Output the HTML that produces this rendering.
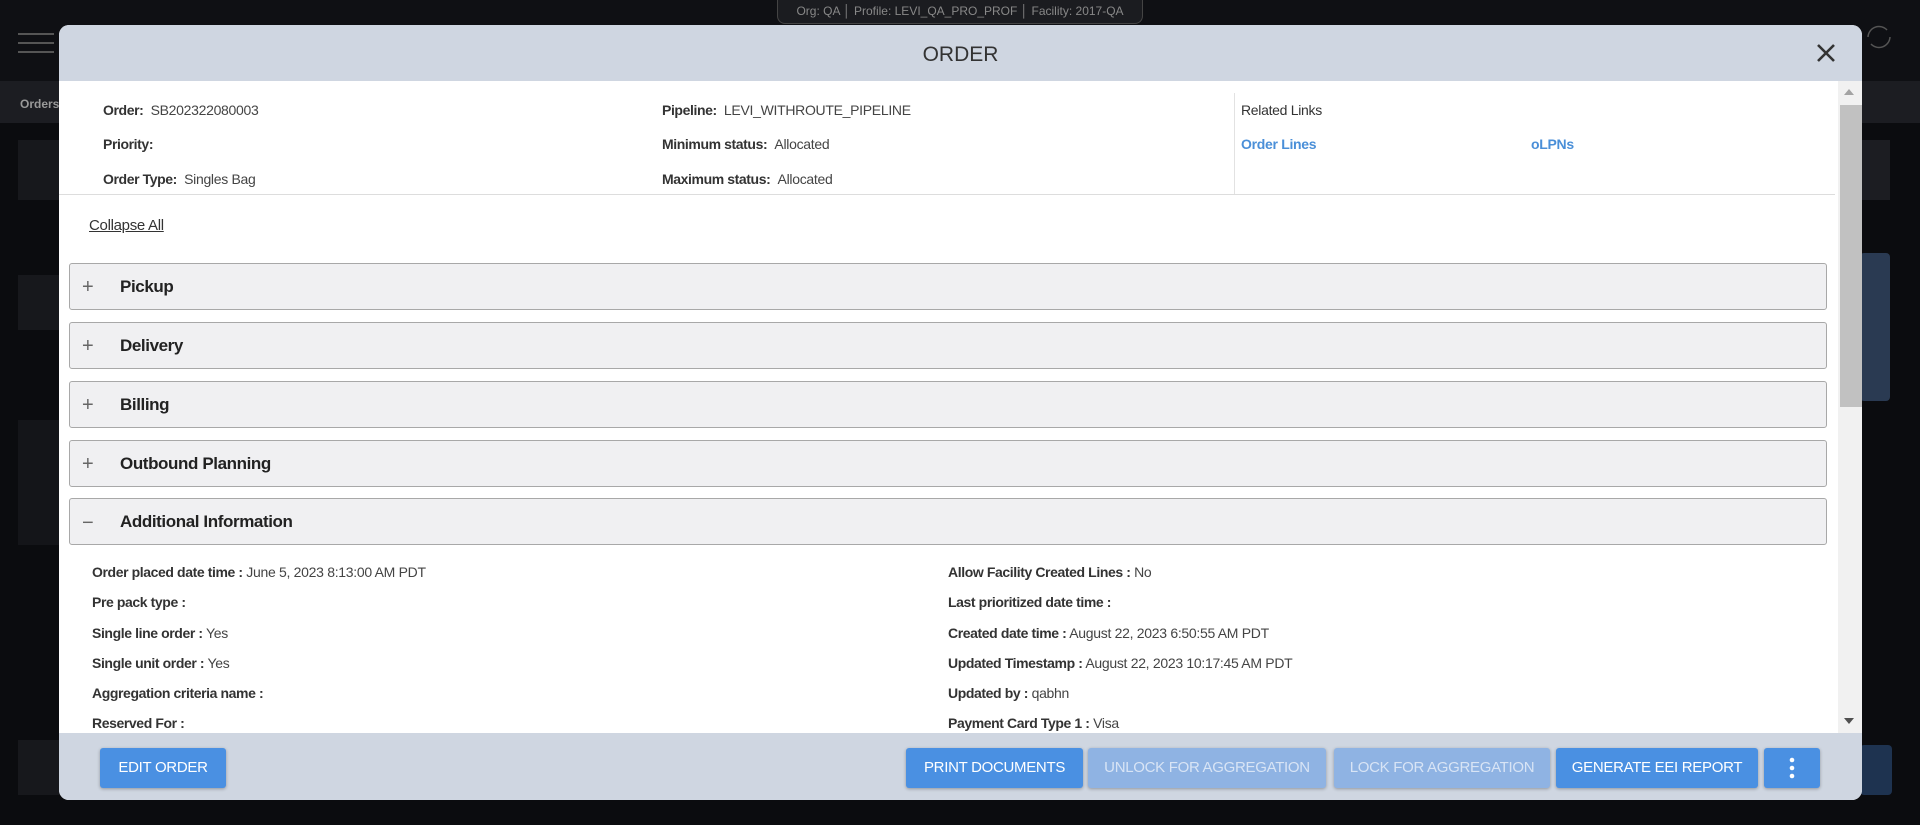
<!DOCTYPE html>
<html><head><meta charset="utf-8"><style>
*{box-sizing:border-box;margin:0;padding:0}
body{width:1920px;height:825px;background:#0b0c0f;font-family:"Liberation Sans",sans-serif;position:relative;overflow:hidden;color:#333}
.abs{position:absolute}
.lbl{font-weight:bold;color:#333;font-size:14px;letter-spacing:-0.4px}
.val{color:#444;font-size:14px;letter-spacing:-0.3px}
.acc{position:absolute;left:69px;width:1758px;height:47px;background:#f0f0f2;border:1px solid #a8a8a8;border-radius:3px}
.acc .s{position:absolute;left:12px;top:13px;font-size:20px;color:#666;line-height:20px}
.acc .t{position:absolute;left:50px;top:13px;font-size:17px;font-weight:bold;color:#222;letter-spacing:-0.4px}
.row{position:absolute;font-size:14px;letter-spacing:-0.3px}
.btn{position:absolute;top:748px;height:40px;border-radius:3px;background:#4a90e2;color:#fff;font-size:15px;text-align:center;line-height:40px;box-shadow:0 1px 3px rgba(0,0,0,.3);letter-spacing:-0.3px}
.btn.d{background:#8fb3e3;color:#d8e4f5}
</style></head><body>
<div class="abs" style="left:0;top:0;width:1920px;height:81px;background:#0f1014"></div>
<div class="abs" style="left:18px;top:33px;width:36px;height:2px;background:#555;box-shadow:0 9px 0 #555,0 18px 0 #555"></div>
<div class="abs" style="left:777px;top:0;width:366px;height:24px;border:1px solid #444;border-top:none;border-radius:0 0 8px 8px;background:#1b1c20;color:#888;font-size:12px;line-height:22px;text-align:center">Org: QA │ Profile: LEVI_QA_PRO_PROF │ Facility: 2017-QA</div>
<div class="abs" style="left:0;top:81px;width:1920px;height:42px;background:#1c1d22"></div>
<div class="abs" style="left:20px;top:97px;color:#999;font-size:12px;font-weight:bold">Orders</div>
<div class="abs" style="left:18px;top:140px;width:50px;height:60px;background:#17181c"></div>
<div class="abs" style="left:18px;top:275px;width:50px;height:55px;background:#17181c"></div>
<div class="abs" style="left:18px;top:420px;width:50px;height:125px;background:#141519"></div>
<div class="abs" style="left:18px;top:740px;width:50px;height:55px;background:#17181c"></div>
<div class="abs" style="left:1860px;top:140px;width:30px;height:60px;background:#1c1d22"></div>
<div class="abs" style="left:1860px;top:253px;width:30px;height:148px;background:#2a3a52;border-radius:4px"></div>
<div class="abs" style="left:1860px;top:745px;width:32px;height:50px;background:#1e3350;border-radius:4px"></div>
<svg class="abs" style="left:1862px;top:20px" width="34" height="34" viewBox="0 0 34 34"><path d="M6 17a11 11 0 0 1 19-7M28 17a11 11 0 0 1-19 7" stroke="#555" stroke-width="1.5" fill="none"/></svg>

<div class="abs" style="left:59px;top:25px;width:1803px;height:775px;background:#fff;border-radius:10px;overflow:hidden">
 <div class="abs" style="left:0;top:0;width:1803px;height:56px;background:#cfd6e1"></div>
 <div class="abs" style="left:0;top:18px;width:1803px;text-align:center;font-size:21px;color:#333">ORDER</div>
 <svg class="abs" style="left:1756px;top:17px" width="22" height="22" viewBox="0 0 22 22"><path d="M3 3L19 19M19 3L3 19" stroke="#333" stroke-width="2.6"/></svg>
 <div class="abs" style="left:1779px;top:56px;width:24px;height:652px;background:#f1f1f1"></div>
 <div class="abs" style="left:1781px;top:80px;width:22px;height:302px;background:#c1c1c1"></div>
 <div class="abs" style="left:1785px;top:64px;width:0;height:0;border:5px solid transparent;border-bottom:6px solid #a3a3a3;border-top:none"></div>
 <div class="abs" style="left:1785px;top:693px;width:0;height:0;border:5px solid transparent;border-top:6px solid #505050;border-bottom:none"></div>
</div>

<div class="abs" style="left:59px;top:194px;width:1776px;height:1px;background:#ddd"></div>
<div class="abs" style="left:1234px;top:93px;width:1px;height:101px;background:#e2e2e2"></div>
<div class="row" style="left:103px;top:102px"><span class="lbl">Order:</span> <span class="val">&nbsp;SB202322080003</span></div>
<div class="row" style="left:103px;top:136px"><span class="lbl">Priority:</span></div>
<div class="row" style="left:103px;top:171px"><span class="lbl">Order Type:</span> <span class="val">&nbsp;Singles Bag</span></div>
<div class="row" style="left:662px;top:102px"><span class="lbl">Pipeline:</span> <span class="val">&nbsp;LEVI_WITHROUTE_PIPELINE</span></div>
<div class="row" style="left:662px;top:136px"><span class="lbl">Minimum status:</span> <span class="val">&nbsp;Allocated</span></div>
<div class="row" style="left:662px;top:171px"><span class="lbl">Maximum status:</span> <span class="val">&nbsp;Allocated</span></div>
<div class="row" style="left:1241px;top:102px;color:#333">Related Links</div>
<div class="row" style="left:1241px;top:136px;color:#4a8fd8;font-weight:bold">Order Lines</div>
<div class="row" style="left:1531px;top:136px;color:#4a8fd8;font-weight:bold">oLPNs</div>
<div class="row" style="left:89px;top:217px;font-size:15px;color:#333;text-decoration:underline">Collapse All</div>

<div class="acc" style="top:263px"><span class="s">+</span><span class="t">Pickup</span></div>
<div class="acc" style="top:322px"><span class="s">+</span><span class="t">Delivery</span></div>
<div class="acc" style="top:381px"><span class="s">+</span><span class="t">Billing</span></div>
<div class="acc" style="top:440px"><span class="s">+</span><span class="t">Outbound Planning</span></div>
<div class="acc" style="top:498px"><span class="s" style="top:14px">−</span><span class="t">Additional Information</span></div>

<div class="row" style="left:92px;top:564px"><span class="lbl">Order placed date time :</span> <span class="val">June 5, 2023 8:13:00 AM PDT</span></div>
<div class="row" style="left:92px;top:594px"><span class="lbl">Pre pack type :</span></div>
<div class="row" style="left:92px;top:625px"><span class="lbl">Single line order :</span> <span class="val">Yes</span></div>
<div class="row" style="left:92px;top:655px"><span class="lbl">Single unit order :</span> <span class="val">Yes</span></div>
<div class="row" style="left:92px;top:685px"><span class="lbl">Aggregation criteria name :</span></div>
<div class="row" style="left:92px;top:715px"><span class="lbl">Reserved For :</span></div>
<div class="row" style="left:948px;top:564px"><span class="lbl">Allow Facility Created Lines :</span> <span class="val">No</span></div>
<div class="row" style="left:948px;top:594px"><span class="lbl">Last prioritized date time :</span></div>
<div class="row" style="left:948px;top:625px"><span class="lbl">Created date time :</span> <span class="val">August 22, 2023 6:50:55 AM PDT</span></div>
<div class="row" style="left:948px;top:655px"><span class="lbl">Updated Timestamp :</span> <span class="val">August 22, 2023 10:17:45 AM PDT</span></div>
<div class="row" style="left:948px;top:685px"><span class="lbl">Updated by :</span> <span class="val">qabhn</span></div>
<div class="row" style="left:948px;top:715px"><span class="lbl">Payment Card Type 1 :</span> <span class="val">Visa</span></div>
<div class="abs" style="left:59px;top:733px;width:1803px;height:67px;background:#cfd6e1;border-radius:0 0 10px 10px"></div>

<div class="btn" style="left:100px;width:126px">EDIT ORDER</div>
<div class="btn" style="left:906px;width:177px">PRINT DOCUMENTS</div>
<div class="btn d" style="left:1088px;width:238px">UNLOCK FOR AGGREGATION</div>
<div class="btn d" style="left:1334px;width:216px">LOCK FOR AGGREGATION</div>
<div class="btn" style="left:1556px;width:202px">GENERATE EEI REPORT</div>
<div class="btn" style="left:1764px;width:56px"><svg width="6" height="22" viewBox="0 0 6 22" style="vertical-align:middle"><circle cx="3" cy="3" r="2.3" fill="#fff"/><circle cx="3" cy="11" r="2.3" fill="#fff"/><circle cx="3" cy="19" r="2.3" fill="#fff"/></svg></div>
</body></html>
